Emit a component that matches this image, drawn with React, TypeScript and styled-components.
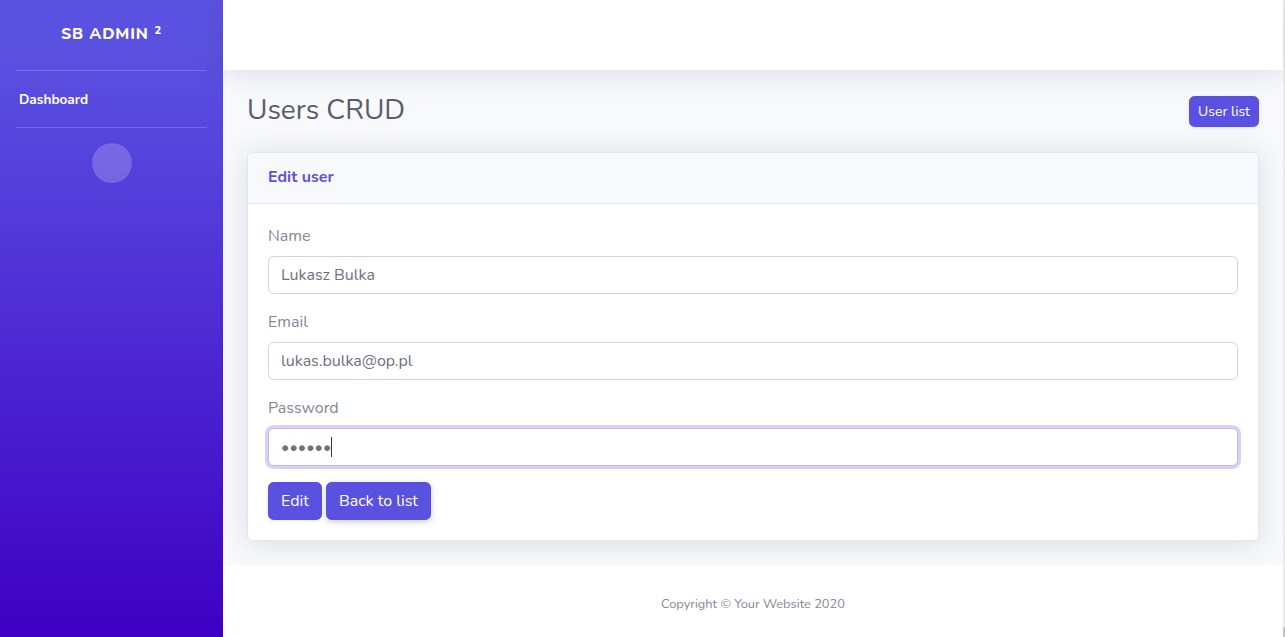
import React from "react";
import styled, { createGlobalStyle } from "styled-components";

const FONT = `"Nunito", "Lato", "Open Sans", "Liberation Sans", sans-serif`;

const GlobalStyle = createGlobalStyle`
  html, body { margin: 0; padding: 0; }
  body {
    font-family: ${FONT};
    font-size: 16px;
    line-height: 1.5;
    color: #858796;
    background: #ffffff;
  }
  * { box-sizing: border-box; }
`;

const Wrapper = styled.div`
  display: flex;
  width: 1285px;
  height: 637px;
  overflow: hidden;
`;

const Sidebar = styled.nav`
  width: 223px;
  flex: 0 0 223px;
  display: flex;
  flex-direction: column;
  align-items: stretch;
  background: linear-gradient(180deg, #5b51e1 8%, #3e00c3 100%);
`;

const Brand = styled.div`
  height: 70px;
  display: flex;
  align-items: center;
  justify-content: center;
  color: #fff;
  font-weight: 800;
  font-size: 16px;
  text-transform: uppercase;
  letter-spacing: 0.05rem;
  padding-bottom: 2px;
`;

const Sup = styled.sup`
  font-size: 11px;
  margin-left: 6px;
  position: relative;
  top: -3px;
`;

const Divider = styled.hr`
  margin: 0 16px;
  border: 0;
  border-top: 1px solid rgba(255, 255, 255, 0.18);
  height: 0;
`;

const NavLink = styled.a`
  display: block;
  padding: 19px 19px 17px;
  color: #fff;
  font-size: 13.6px;
  font-weight: 700;
  line-height: 20px;
  text-decoration: none;
`;

const ToggleWrap = styled.div`
  display: flex;
  justify-content: center;
  padding-top: 15px;
`;

const Toggle = styled.button`
  width: 40px;
  height: 40px;
  border-radius: 50%;
  border: 0;
  background: rgba(255, 255, 255, 0.2);
  padding: 0;
`;

const ContentWrapper = styled.div`
  flex: 1;
  display: flex;
  flex-direction: column;
  background: #f8f9fc;
  min-width: 0;
`;

const Topbar = styled.header`
  height: 70px;
  flex: 0 0 70px;
  background: #fff;
  box-shadow: 0 2.4px 28px 0 rgba(58, 59, 69, 0.15);
  margin-bottom: 24px;
  position: relative;
  z-index: 1;
`;

const Container = styled.main`
  padding: 0 24px;
`;

const Heading = styled.div`
  display: flex;
  align-items: center;
  justify-content: space-between;
  margin-bottom: 24px;
  height: 34px;
`;

const Title = styled.h1`
  margin: 0;
  font-size: 28px;
  font-weight: 400;
  line-height: 1.2;
  color: #5a5c69;
`;

const Button = styled.button<{ $small?: boolean; $shadow?: boolean }>`
  display: inline-block;
  font-family: ${FONT};
  font-weight: 400;
  color: #fff;
  background: #5b51e0;
  border: 1px solid #5b51e0;
  border-radius: 5.6px;
  cursor: pointer;
  font-size: ${(p) => (p.$small ? "14px" : "16px")};
  line-height: ${(p) => (p.$small ? "21px" : "24px")};
  padding: ${(p) => (p.$small ? "4px 8px" : "6px 12px")};
  box-shadow: ${(p) =>
    p.$shadow ? "0 2px 6px rgba(58, 59, 69, 0.25)" : "0 1px 3px rgba(58,59,69,0.12)"};
`;

const Card = styled.section`
  background: #fff;
  border: 1px solid #e3e6f0;
  border-radius: 5.6px;
  box-shadow: 0 2.4px 28px 0 rgba(58, 59, 69, 0.15);
  margin-bottom: 24px;
  overflow: hidden;
`;

const CardHeader = styled.div`
  background: #f8f9fc;
  border-bottom: 1px solid #e3e6f0;
  padding: 11px 20px 13px;
`;

const CardTitle = styled.h6`
  margin: 0;
  font-size: 16px;
  line-height: 26px;
  font-weight: 700;
  color: #5b51e0;
`;

const CardBody = styled.form`
  padding: 20px;
`;

const Group = styled.div`
  margin-bottom: 16px;
`;

const Field = styled.div`
  position: relative;
`;

const Label = styled.label`
  display: block;
  margin-bottom: 8px;
  font-size: 16px;
  line-height: 24px;
  color: #858796;
`;

const Input = styled.input<{ $focused?: boolean }>`
  display: block;
  width: 100%;
  height: 38px;
  padding: 6px 12px;
  font-family: ${FONT};
  font-size: 16px;
  line-height: 24px;
  color: #6e707e;
  background: #fff;
  border: 1px solid ${(p) => (p.$focused ? "#bdb8f4" : "#d1d3e2")};
  border-radius: 5.6px;
  outline: none;
  box-shadow: ${(p) => (p.$focused ? "0 0 0 3px rgba(91, 81, 224, 0.25)" : "none")};
`;

const Caret = styled.span`
  position: absolute;
  left: 63px;
  top: 9px;
  width: 1px;
  height: 20px;
  background: #3a3b45;
  pointer-events: none;
`;

const Actions = styled.div`
  display: flex;
  gap: 4px;
`;

const Footer = styled.footer`
  margin-top: auto;
  background: #fff;
  padding: 30px 0 33px;
  text-align: center;
  font-size: 12.8px;
  line-height: 19px;
  color: #858796;
`;

const Scroll = styled.div`
  width: 2px;
  flex: 0 0 2px;
  background: #ececec;
  display: flex;
  flex-direction: column;
  justify-content: flex-end;
`;

const Thumb = styled.div`
  height: 10px;
  background: #c4c4c4;
`;

export default function App() {
  return (
    <>
      <GlobalStyle />
      <Wrapper>
        <Sidebar>
          <Brand>
            SB Admin<Sup>2</Sup>
          </Brand>
          <Divider />
          <NavLink href="#">Dashboard</NavLink>
          <Divider />
          <ToggleWrap>
            <Toggle aria-label="Toggle sidebar" />
          </ToggleWrap>
        </Sidebar>
        <ContentWrapper>
          <Topbar />
          <Container>
            <Heading>
              <Title>Users CRUD</Title>
              <Button $small>User list</Button>
            </Heading>
            <Card>
              <CardHeader>
                <CardTitle>Edit user</CardTitle>
              </CardHeader>
              <CardBody onSubmit={(e) => e.preventDefault()}>
                <Group>
                  <Label htmlFor="name">Name</Label>
                  <Input id="name" type="text" defaultValue="Lukasz Bulka" />
                </Group>
                <Group>
                  <Label htmlFor="email">Email</Label>
                  <Input id="email" type="email" defaultValue="lukas.bulka@op.pl" />
                </Group>
                <Group>
                  <Label htmlFor="password">Password</Label>
                  <Field>
                    <Input id="password" type="password" defaultValue="123456" $focused />
                    <Caret />
                  </Field>
                </Group>
                <Actions>
                  <Button type="submit">Edit</Button>
                  <Button type="button" $shadow>
                    Back to list
                  </Button>
                </Actions>
              </CardBody>
            </Card>
          </Container>
          <Footer>Copyright © Your Website 2020</Footer>
        </ContentWrapper>
        <Scroll>
          <Thumb />
        </Scroll>
      </Wrapper>
    </>
  );
}
